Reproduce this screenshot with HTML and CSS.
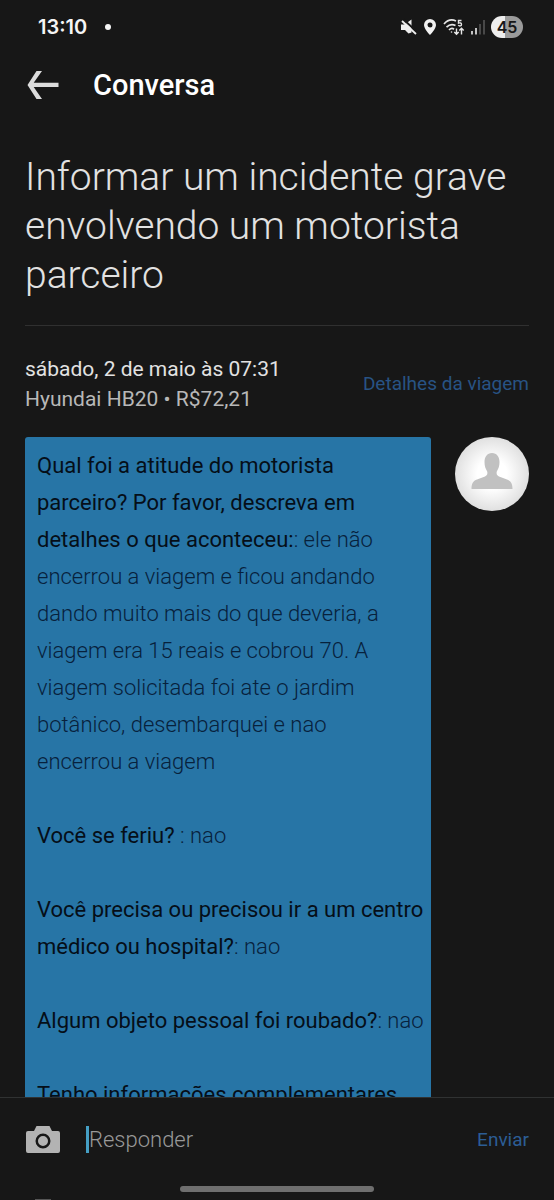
FILE: index.html
```html
<!DOCTYPE html>
<html lang="pt-BR">
<head>
<meta charset="utf-8">
<meta name="viewport" content="width=device-width, initial-scale=1">
<title>Conversa</title>
<link rel="stylesheet" href="styles.css">
</head>
<body>
<div class="app">
  <div class="status">
    <span class="clock">13:10</span>
    <span class="dot"></span>
    <div class="status-icons">
      <svg width="16" height="18" viewBox="0 0 16 18" fill="#eee"><path d="M0 6.500h3.500L10.500 1.500v13L7.500 15.500 4 12H0z"/><path d="M2.500 1.500l13 12" stroke="#171717" stroke-width="2"/><path d="M1 3l14 13" stroke="#eee" stroke-width="1.800"/></svg>
      <svg width="14" height="18" viewBox="0 0 14 18" fill="#f2f2f2"><path fill-rule="evenodd" d="M7 1a6 6 0 0 0-6 6c0 4 6 10 6 10s6-6 6-10a6 6 0 0 0-6-6zm0 3.500a2.500 2.500 0 1 1 0 5 2.500 2.500 0 0 1 0-5z"/></svg>
      <svg width="22" height="18" viewBox="0 0 22 18" fill="none" stroke="#e6e6e6" stroke-width="1.700"><path d="M1 6c3.500-4 8-4.800 12-3M3.500 9.200c3-3 6-3.300 9-1.700M6 12c1.800-1.800 3.500-1.900 5-.8"/><circle cx="8.500" cy="14" r=".8" fill="#e6e6e6" stroke="none"/><path d="M18.500 2.500h-3v2.700c1.700-.7 3-.3 3 1.200 0 1.700-2 2-3.300.9" stroke-width="1.400"/><path d="M13.500 10.500V16M11.300 14l2.200 2.200 2.200-2.200M18.500 16.500V10.500M16.300 12.500l2.200-2.200 2.200 2.200" stroke-width="1.400"/></svg>
      <svg width="14" height="18" viewBox="0 0 14 18"><path d="M1 13v3.500M5 10v6.500" stroke="#eee" stroke-width="1.600"/><path d="M9 6v10.500M13 2v14.500" stroke="#555" stroke-width="1.600"/></svg>
      <span class="battery">45</span>
    </div>
  </div>

  <header class="topbar">
    <button class="back" type="button" aria-label="Voltar">
      <svg width="32" height="30" viewBox="0 0 32 30"><path d="M9.500 1H15L6.700 12.700H31.500v4.200H6.700L15 29H9.500L.5 15z" fill="#dcdcdc"/></svg>
    </button>
    <span class="topbar-title">Conversa</span>
  </header>

  <main class="content">
    <h1 class="title">Informar um incidente grave envolvendo um motorista parceiro</h1>
    <section class="trip">
      <div>
        <div class="trip-date">sábado, 2 de maio às 07:31</div>
        <div class="trip-car">Hyundai HB20 • R$72,21</div>
      </div>
      <a class="link" href="#">Detalhes da viagem</a>
    </section>
    <section class="message">
      <div class="bubble">
        <p><strong>Qual foi a atitude do motorista parceiro? Por favor, descreva em detalhes o que aconteceu:</strong>: ele não encerrou a viagem e ficou andando dando muito mais do que deveria, a viagem era 15 reais e cobrou 70. A viagem solicitada foi ate o jardim botânico, desembarquei e nao<br>encerrou a viagem</p>
        <p><strong>Você se feriu? </strong>: nao</p>
        <p><strong>Você precisa ou precisou ir a um centro médico ou hospital?</strong>: nao</p>
        <p><strong>Algum objeto pessoal foi roubado?</strong>: nao</p>
        <p><strong>Tenho informações complementares</strong></p>
      </div>
      <svg class="avatar" viewBox="0 0 74 74">
        <defs><radialGradient id="glow"><stop offset=".4" stop-color="#fff"/><stop offset="1" stop-color="#e0e0e0"/></radialGradient></defs>
        <circle cx="37" cy="37" r="37" fill="url(#glow)"/>
        <path d="M37 16c5 0 7.500 4 7.500 9 0 4-1 6.500-2.700 9.500-.6 2.500.2 4 2.200 5l8 3c4 1.500 5.500 4 5.500 9.500h-41c0-5.500 1.500-8 5.500-9.500l8-3c2-1 2.800-2.500 2.200-5C30.500 31.500 29.500 29 29.500 25c0-5 2.500-9 7.500-9z" fill="#c1c1c1"/>
      </svg>
    </section>
  </main>

  <footer class="footer">
    <form class="composer">
      <button class="camera" type="button" aria-label="Anexar foto">
        <svg width="34" height="27" viewBox="0 0 34 27"><path fill="#b3b3b3" fill-rule="evenodd" d="M2 5h6l2.500-5h13L26 5h6a2 2 0 0 1 2 2v18a2 2 0 0 1-2 2H2a2 2 0 0 1-2-2V7a2 2 0 0 1 2-2zm15 2.500a7.500 7.500 0 1 0 0 15 7.500 7.500 0 0 0 0-15zm0 2.500a5 5 0 1 1 0 10 5 5 0 0 1 0-10z"/></svg>
      </button>
      <input class="reply" type="text" placeholder="Responder" aria-label="Responder">
      <button class="send" type="submit">Enviar</button>
    </form>
    <div class="home-bar"></div>
    <div class="peek"></div>
  </footer>
</div>
</body>
</html>
```
FILE: styles.css
```css
* { box-sizing: border-box; }

body {
  margin: 0;
  background: #171717;
  color: #e2e2e2;
  font-family: Roboto, "Liberation Sans", sans-serif;
}

button {
  padding: 0;
  border: 0;
  background: none;
  font: inherit;
  cursor: pointer;
}

svg { display: block; flex: none; }

.app {
  display: flex;
  flex-direction: column;
  height: 100vh;
  overflow: hidden;
}

.status {
  display: flex;
  align-items: center;
  height: 54px;
  padding: 0 31px 0 38px;
  flex: none;
}

.clock {
  font-family: Inter, Roboto, sans-serif;
  font-size: 20px;
  font-weight: 600;
  color: #f5f5f5;
}

.dot {
  width: 6px;
  height: 6px;
  margin-left: 18px;
  border-radius: 50%;
  background: #f5f5f5;
}

.status-icons {
  display: flex;
  align-items: center;
  gap: 6px;
  margin-left: auto;
}

.battery {
  width: 32px;
  height: 22px;
  border-radius: 11px;
  background: linear-gradient(90deg, #eee 45%, #9b9b9b 45%);
  color: #171717;
  font-family: Inter, Roboto, sans-serif;
  font-size: 16px;
  font-weight: 600;
  line-height: 22px;
  text-align: center;
}

.topbar {
  display: flex;
  align-items: center;
  gap: 34px;
  height: 76px;
  padding: 0 27px 15px;
  flex: none;
}

.topbar-title {
  font-size: 29px;
  font-weight: 500;
  color: #fff;
}

.content {
  flex: 1;
  min-height: 0;
  overflow: hidden;
  padding: 23px 25px 0;
}

.title {
  margin: 0;
  padding-bottom: 25px;
  border-bottom: 1px solid #303030;
  font-size: 39px;
  font-weight: 350;
  line-height: 49px;
}

.trip {
  display: flex;
  align-items: center;
  justify-content: space-between;
  padding: 28px 0 23px;
  font-size: 21px;
  line-height: 30px;
}

.trip-car { color: #b8b8b8; }

.link {
  color: #285384;
  font-size: 19px;
  text-decoration: none;
}

.message {
  display: flex;
  align-items: flex-start;
  gap: 24px;
}

.bubble {
  flex: 1;
  padding: 10px 4px 11px 12px;
  border-radius: 3px;
  background: #2775a6;
  color: #07213c;
  font-size: 22px;
  font-weight: 300;
  line-height: 37px;
}

.bubble p { margin: 0 0 37px; }

.bubble strong {
  color: #050e18;
  font-weight: 400;
}

.avatar {
  width: 74px;
  height: 74px;
}

.footer {
  display: flex;
  flex-direction: column;
  flex: none;
  border-top: 1px solid #303232;
}

.composer {
  display: flex;
  align-items: center;
  gap: 26px;
  height: 82px;
  padding: 0 25px 0 26px;
}

.reply {
  flex: 1;
  min-width: 0;
  height: 27px;
  padding: 0;
  border: 0;
  border-left: 3px solid #459fc4;
  border-radius: 0;
  outline: 0;
  background: none;
  color: #e2e2e2;
  font: 300 22px Roboto, "Liberation Sans", sans-serif;
}

.reply::placeholder { color: #999; opacity: 1; }

.send {
  color: #2c5d95;
  font-size: 19px;
}

.home-bar {
  align-self: center;
  width: 35%;
  height: 6px;
  margin: 6px 0 7px;
  border-radius: 3px;
  background: #6f6f6f;
}

.peek {
  width: 16px;
  height: 1px;
  margin-left: 35px;
  background: #555;
}
```
